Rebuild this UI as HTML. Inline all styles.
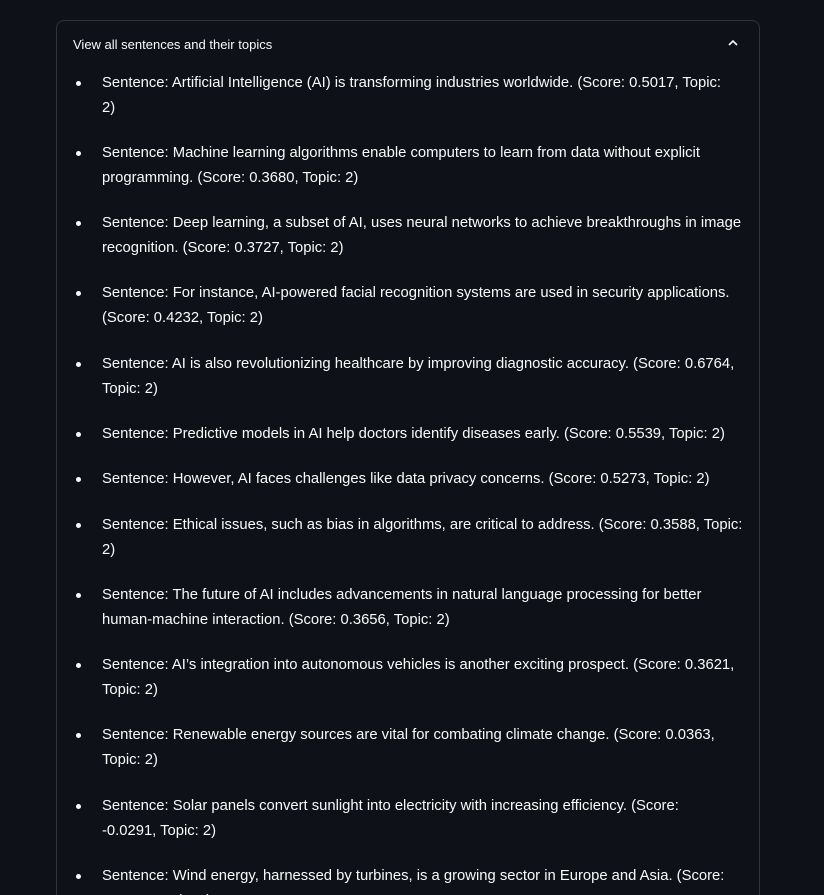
<!DOCTYPE html>
<html><head><meta charset="utf-8"><style>
html,body{margin:0;padding:0;background:#0e1117;width:824px;height:895px;overflow:hidden;font-family:"Source Sans Pro","Liberation Sans",sans-serif;color:#fafafa}
.wrap{position:absolute;left:0;top:0;width:824px;height:895px;overflow:hidden}
.box{position:absolute;left:56px;top:20px;width:704px;height:900px;border:1px solid #31333b;border-radius:8px;box-sizing:border-box}
.hd{position:absolute;left:16px;top:15px;font-size:13px;line-height:18px}
.chev{position:absolute;left:670px;top:16px}
ul{position:absolute;left:0;top:49.5px;margin:0;padding:0;list-style:none}
li{position:relative;margin-bottom:20.3px;padding-left:45px;font-size:14.8px;line-height:25px}
li span{display:block;white-space:nowrap}
li:before{content:"";position:absolute;left:19px;top:10px;width:5px;height:5px;border-radius:50%;background:#fafafa}
</style></head><body>
<div class="wrap">
<div class="box">
<div class="hd">View all sentences and their topics</div>
<svg class="chev" width="12" height="12" viewBox="0 0 12 12"><path d="M2 8 L6 4 L10 8" fill="none" stroke="#fafafa" stroke-width="1.6"/></svg>
<ul>
<li><span>Sentence: Artificial Intelligence (AI) is transforming industries worldwide. (Score: 0.5017, Topic:</span><span>2)</span></li>
<li><span>Sentence: Machine learning algorithms enable computers to learn from data without explicit</span><span>programming. (Score: 0.3680, Topic: 2)</span></li>
<li><span>Sentence: Deep learning, a subset of AI, uses neural networks to achieve breakthroughs in image</span><span>recognition. (Score: 0.3727, Topic: 2)</span></li>
<li><span>Sentence: For instance, AI-powered facial recognition systems are used in security applications.</span><span>(Score: 0.4232, Topic: 2)</span></li>
<li><span>Sentence: AI is also revolutionizing healthcare by improving diagnostic accuracy. (Score: 0.6764,</span><span>Topic: 2)</span></li>
<li><span>Sentence: Predictive models in AI help doctors identify diseases early. (Score: 0.5539, Topic: 2)</span></li>
<li><span>Sentence: However, AI faces challenges like data privacy concerns. (Score: 0.5273, Topic: 2)</span></li>
<li><span>Sentence: Ethical issues, such as bias in algorithms, are critical to address. (Score: 0.3588, Topic:</span><span>2)</span></li>
<li><span>Sentence: The future of AI includes advancements in natural language processing for better</span><span>human-machine interaction. (Score: 0.3656, Topic: 2)</span></li>
<li><span>Sentence: AI’s integration into autonomous vehicles is another exciting prospect. (Score: 0.3621,</span><span>Topic: 2)</span></li>
<li><span>Sentence: Renewable energy sources are vital for combating climate change. (Score: 0.0363,</span><span>Topic: 2)</span></li>
<li><span>Sentence: Solar panels convert sunlight into electricity with increasing efficiency. (Score:</span><span>-0.0291, Topic: 2)</span></li>
<li><span>Sentence: Wind energy, harnessed by turbines, is a growing sector in Europe and Asia. (Score:</span><span>0.0100, Topic: 2)</span></li>
</ul>
</div>
</div>
</body></html>
